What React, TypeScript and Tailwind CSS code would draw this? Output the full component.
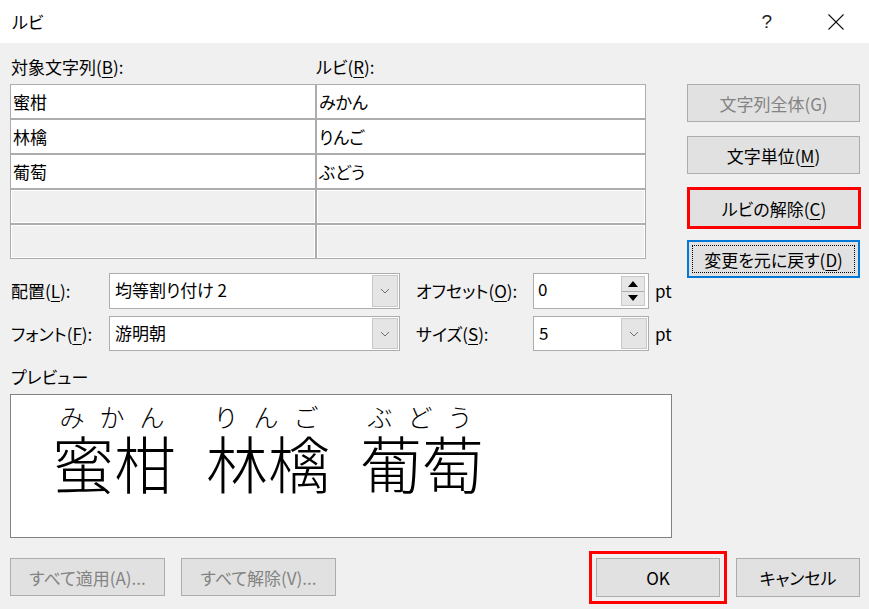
import React from "react";

// ルビ dialog (Word-style)

const ui = "font-['Noto_Sans_CJK_JP',sans-serif] [font-feature-settings:'palt']";

function K({ k }: { k: string }) {
  return <span className="underline decoration-1 underline-offset-[3px]">{k}</span>;
}

function Chevron() {
  return (
    <svg width="10" height="6" viewBox="0 0 10 6" fill="none">
      <polyline points="1,1 5,5 9,1" stroke="#6f6f6f" strokeWidth="1" />
    </svg>
  );
}

function Combo({ value, className }: { value: string; className: string }) {
  return (
    <div className={`shrink-0 flex items-stretch bg-white border border-[#adadad] p-[1px] ${className}`}>
      <div className="flex-1 pl-[4px] text-[17px] leading-[30px] text-black">{value}</div>
      <div className="w-[26px] flex items-center justify-center bg-[#e5e5e5] border border-[#c8c8c8]">
        <Chevron />
      </div>
    </div>
  );
}

function Spin({ value }: { value: string }) {
  return (
    <div className="shrink-0 flex items-stretch bg-white border border-[#adadad] w-[116px] h-[36px] pt-[2px] pb-[2px] pr-[3px]">
      <div className="flex-1 pl-[4px] text-[17px] leading-[26px] text-black">{value}</div>
      <div className="w-[24px] flex flex-col gap-[1px] bg-[#adadad] border border-[#c8c8c8]">
        <div className="flex-1 flex items-center justify-center bg-[#e6e6e6]">
          <svg width="10" height="6" viewBox="0 0 10 6">
            <polygon points="0,6 5,0 10,6" fill="#000" />
          </svg>
        </div>
        <div className="flex-1 flex items-center justify-center bg-[#e6e6e6]">
          <svg width="10" height="6" viewBox="0 0 10 6">
            <polygon points="0,0 10,0 5,6" fill="#000" />
          </svg>
        </div>
      </div>
    </div>
  );
}

function Btn({ children, className = "", disabled = false }: { children: React.ReactNode; className?: string; disabled?: boolean }) {
  return (
    <div
      className={`flex items-center justify-center bg-[#e1e1e1] text-[17px] leading-none whitespace-nowrap ${
        disabled ? "text-[#838383]" : "text-black"
      } ${className}`}
    >
      {children}
    </div>
  );
}

const rows = [
  ["蜜柑", "みかん"],
  ["林檎", "りんご"],
  ["葡萄", "ぶどう"],
  ["", ""],
  ["", ""],
];

const preview = [
  { base: "蜜柑", ruby: ["み", "か", "ん"] },
  { base: "林檎", ruby: ["り", "ん", "ご"] },
  { base: "葡萄", ruby: ["ぶ", "ど", "う"] },
];

export default function App() {
  return (
    <div className={`w-[869px] h-[609px] bg-[#f0f0f0] flex flex-col text-black ${ui}`}>
      {/* Title bar */}
      <div className="h-[43px] bg-white flex items-center pl-[12px] pr-[25px] shrink-0">
        <span className="text-[17px] leading-none">ルビ</span>
        <span className="ml-auto text-[19px] leading-none text-[#222] font-['Liberation_Sans',sans-serif]">?</span>
        <svg className="ml-[56px]" width="16" height="16" viewBox="0 0 16 16" fill="none">
          <line x1="0.5" y1="0.5" x2="15.5" y2="15.5" stroke="#111" strokeWidth="1.1" />
          <line x1="15.5" y1="0.5" x2="0.5" y2="15.5" stroke="#111" strokeWidth="1.1" />
        </svg>
      </div>

      <div className="flex pl-[10px]">
        {/* Left column */}
        <div className="w-[662px] flex flex-col">
          <div className="grid grid-cols-[306px_330px] pt-[12px] h-[36px] text-[17px] leading-[24px]">
            <span className="pl-[1px]">
              対象文字列(<K k="B" />):
            </span>
            <span>
              ルビ(<K k="R" />):
            </span>
          </div>

          <div className="mt-[5px] w-[636px] grid grid-cols-[304px_328px] gap-[2px] bg-[#adadad] p-[1px]">
            {rows.map(([base, ruby], i) =>
              base ? (
                <React.Fragment key={i}>
                  <div className="h-[33px] bg-white pl-[2px] text-[17px] leading-[33px]">{base}</div>
                  <div className="h-[33px] bg-white pl-[2px] text-[17px] leading-[33px]">{ruby}</div>
                </React.Fragment>
              ) : (
                <React.Fragment key={i}>
                  <div className="h-[33px] bg-[#f0f0f0] shadow-[inset_0_0_0_1px_#ffffff]" />
                  <div className="h-[33px] bg-[#f0f0f0] shadow-[inset_0_0_0_1px_#ffffff]" />
                </React.Fragment>
              )
            )}
          </div>

          {/* Options */}
          <div className="mt-[14px] flex items-center h-[36px] text-[17px] whitespace-nowrap">
            <span className="w-[99px] shrink-0 pl-[1px]">
              配置(<K k="L" />):
            </span>
            <Combo value="均等割り付け 2" className="w-[291px] h-[36px]" />
            <span className="w-[133px] shrink-0 pl-[16px]">
              オフセット(<K k="O" />):
            </span>
            <Spin value="0" />
            <span className="ml-[6px]">pt</span>
          </div>
          <div className="mt-[7px] flex items-center h-[35px] text-[17px] whitespace-nowrap">
            <span className="w-[99px] shrink-0 pl-[1px]">
              フォント(<K k="F" />):
            </span>
            <Combo value="游明朝" className="w-[291px] h-[35px]" />
            <span className="w-[133px] shrink-0 pl-[16px]">
              サイズ(<K k="S" />):
            </span>
            <Combo value="5" className="w-[116px] h-[35px]" />
            <span className="ml-[6px]">pt</span>
          </div>

          {/* Preview */}
          <div className="mt-[14px] h-[24px] text-[17px] leading-[24px] pl-[1px]">プレビュー</div>
          <div className="mt-[5px] h-[144px] bg-white border border-[#828282] pl-[41px] pt-[9px] flex gap-[30px] [font-feature-settings:normal]">
            {preview.map((w) => (
              <div key={w.base} className="flex flex-col w-[124px]">
                <div className="flex justify-around pr-[4px] text-[25px] leading-none h-[25px] font-light">
                  {w.ruby.map((r, i) => (
                    <span key={i}>{r}</span>
                  ))}
                </div>
                <div className="mt-[2px] text-[62px] leading-none font-light">{w.base}</div>
              </div>
            ))}
          </div>
        </div>

        {/* Right column */}
        <div className="ml-[15px] w-[173px] pt-[41px] flex flex-col">
          <Btn disabled className="h-[38px] border border-[#adadad]">
            文字列全体(G)
          </Btn>
          <Btn className="mt-[14px] h-[38px] border border-[#adadad]">
            文字単位(<K k="M" />)
          </Btn>
          <Btn className="mt-[13px] h-[42px] w-[174px] border-3 border-[#ff0000]">
            ルビの解除(<K k="C" />)
          </Btn>
          <div className="mt-[11px] h-[38px] border-2 border-[#0078d7] bg-[#e1e1e1] p-[3px]">
            <div className="h-full border border-dotted border-black flex items-center justify-center text-[17px] leading-none">
              変更を元に戻す(<K k="D" />)
            </div>
          </div>
        </div>
      </div>

      {/* Bottom buttons */}
      <div className="mt-[20px] flex pl-[10px] pr-[9px]">
        <Btn disabled className="w-[155px] h-[38px] border border-[#adadad]">
          すべて適用(A)...
        </Btn>
        <Btn disabled className="ml-[16px] w-[155px] h-[38px] border border-[#adadad]">
          すべて解除(V)...
        </Btn>
        <Btn className="ml-auto w-[124px] h-[39px] border border-[#adadad] outline-3 outline-[#ff0000] outline-offset-[4px]">
          OK
        </Btn>
        <Btn className="ml-[16px] w-[124px] h-[39px] border border-[#adadad]">キャンセル</Btn>
      </div>
    </div>
  );
}
